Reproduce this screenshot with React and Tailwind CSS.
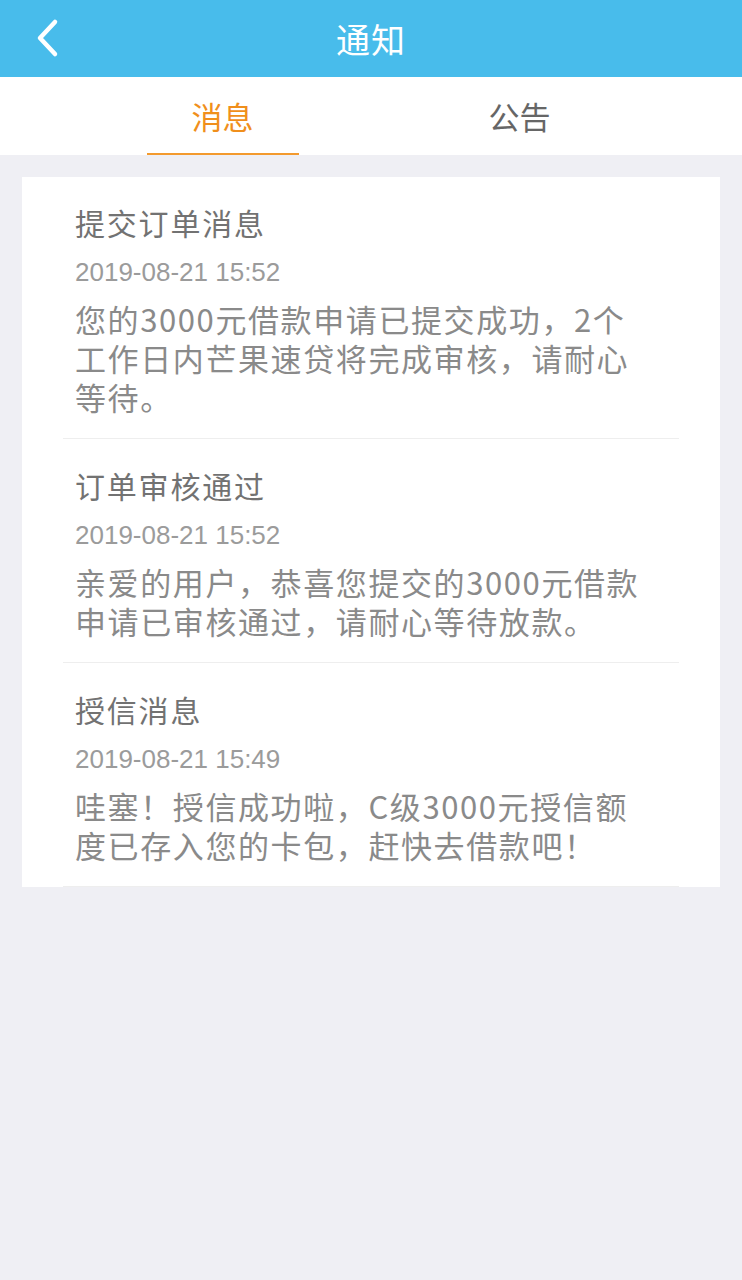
import React from "react";

const messages = [
  {
    title: "提交订单消息",
    time: "2019-08-21 15:52",
    body: "您的3000元借款申请已提交成功，2个工作日内芒果速贷将完成审核，请耐心等待。",
  },
  {
    title: "订单审核通过",
    time: "2019-08-21 15:52",
    body: "亲爱的用户，恭喜您提交的3000元借款申请已审核通过，请耐心等待放款。",
  },
  {
    title: "授信消息",
    time: "2019-08-21 15:49",
    body: "哇塞！授信成功啦，C级3000元授信额度已存入您的卡包，赶快去借款吧！",
  },
];

const cjk = { fontFamily: '"Noto Sans CJK SC", "Noto Sans", sans-serif' };

export default function App() {
  return (
    <div className="min-h-[1280px] w-full bg-[#efeff4]" style={cjk}>
      {/* header */}
      <div className="relative flex h-[77px] items-center justify-center bg-[#48bceb]">
        <button className="absolute left-[30px] top-[16px] flex h-[44px] w-[34px] items-center justify-center">
          <svg width="26" height="40" viewBox="0 0 26 40" fill="none">
            <path
              d="M21 4 L6 20 L21 36"
              stroke="white"
              strokeWidth="4.5"
              strokeLinecap="round"
              strokeLinejoin="round"
            />
          </svg>
        </button>
        <span className="text-[34px] leading-none tracking-[1px] text-white">通知</span>
      </div>

      {/* tabs */}
      <div className="flex h-[78px] justify-center gap-[145px] bg-white">
        <div className="flex w-[152px] flex-col items-center justify-between">
          <span className="mt-[21px] text-[31px] leading-[36px] text-[#f08f1c]">消息</span>
          <div className="h-[2px] w-full bg-[#f39a2e]" />
        </div>
        <div className="flex w-[152px] flex-col items-center">
          <span className="mt-[21px] text-[31px] leading-[36px] text-[#666666]">公告</span>
        </div>
      </div>

      {/* list */}
      <div className="px-[22px] pt-[22px]">
        <div className="bg-white px-[41px]">
          {messages.map((m, i) => (
            <div
              key={i}
              className={`border-b border-[#eeeeee] pl-[12px] pr-[30px] pb-[22px] ${
                i === 0 ? "pt-[27px]" : "pt-[28px]"
              }`}
            >
              <div className="text-[30px] leading-[36px] tracking-[1.8px] text-[#727272]">
                {m.title}
              </div>
              <div
                className="mt-[17px] text-[26px] leading-[30px] text-[#9b9b9b]"
                style={{ fontFamily: '"Liberation Sans", Arial, sans-serif' }}
              >
                {m.time}
              </div>
              <div className="mt-[12px] text-[31px] leading-[39px] tracking-[1.6px] text-[#8a8a8a]">
                {m.body}
              </div>
            </div>
          ))}
        </div>
      </div>
    </div>
  );
}
